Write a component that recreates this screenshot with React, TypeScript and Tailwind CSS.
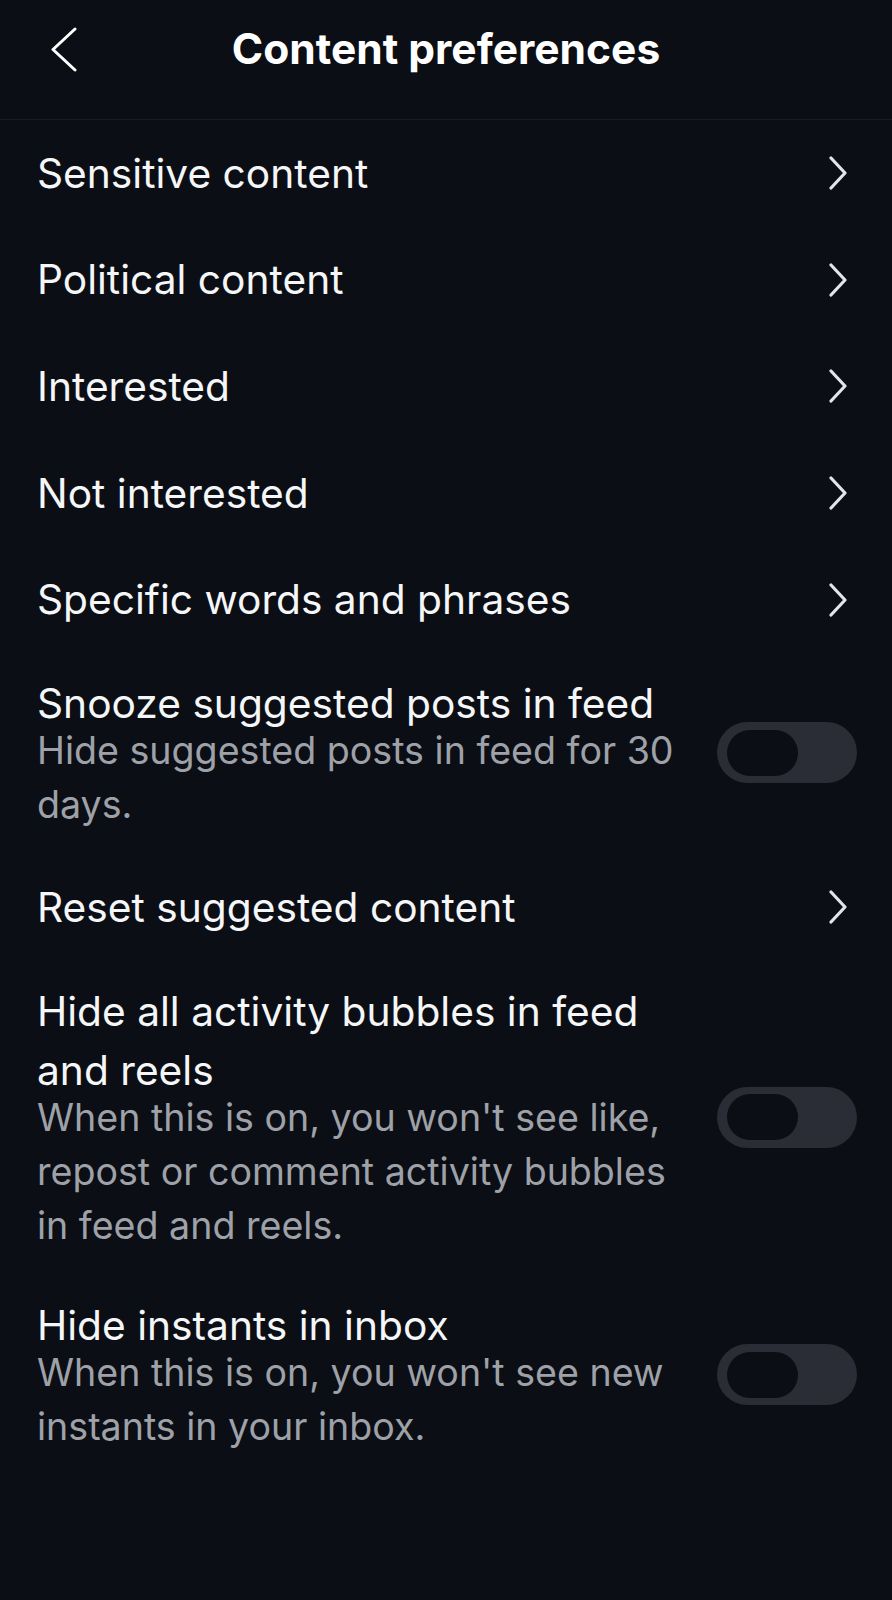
import { useState } from "react";

type Item =
  | { kind: "link"; title: string }
  | { kind: "toggle"; title: string; desc: string };

const items: Item[] = [
  { kind: "link", title: "Sensitive content" },
  { kind: "link", title: "Political content" },
  { kind: "link", title: "Interested" },
  { kind: "link", title: "Not interested" },
  { kind: "link", title: "Specific words and phrases" },
  { kind: "toggle", title: "Snooze suggested posts in feed", desc: "Hide suggested posts in feed for 30 days." },
  { kind: "link", title: "Reset suggested content" },
  {
    kind: "toggle",
    title: "Hide all activity bubbles in feed and reels",
    desc: "When this is on, you won't see like, repost or comment activity bubbles in feed and reels.",
  },
  {
    kind: "toggle",
    title: "Hide instants in inbox",
    desc: "When this is on, you won't see new instants in your inbox.",
  },
];

const Chevron = () => (
  <svg width="20" height="34" viewBox="0 0 20 34" fill="none" className="shrink-0">
    <path d="M3 2 L17 17 L3 32" stroke="#e4e5e8" strokeWidth={3.2} strokeLinecap="round" strokeLinejoin="round" />
  </svg>
);

const BackArrow = () => (
  <svg width="28" height="45" viewBox="0 0 28 45" fill="none">
    <path d="M25 2 L3 22.5 L25 43" stroke="#ffffff" strokeWidth={3} strokeLinecap="round" strokeLinejoin="round" />
  </svg>
);

const Toggle = () => {
  const [on, setOn] = useState(false);
  return (
    <button
      onClick={() => setOn(!on)}
      className={`shrink-0 w-[140px] h-[61px] rounded-full flex items-center px-[10px] ${
        on ? "bg-[#3b82f6] justify-end" : "bg-[#2a2d35] justify-start"
      }`}
    >
      <span className="block w-[71px] h-[46px] rounded-full bg-[#0b0e14]" />
    </button>
  );
};

export default function App() {
  return (
    <div
      className="min-h-[1600px] bg-[#0b0e14] text-[#f5f6f7]"
      style={{ fontFamily: "Inter, 'Noto Sans', sans-serif" }}
    >
      <div className="relative h-[120px] flex items-start justify-center border-b border-[#1a1d24]">
        <button className="absolute left-[50px] top-[27px]">
          <BackArrow />
        </button>
        <h1 className="mt-[23px] text-[42.5px] leading-[52px] font-bold text-white">
          Content preferences
        </h1>
      </div>

      <div>
        {items.map((it) =>
          it.kind === "link" ? (
            <div
              key={it.title}
              className="flex items-center justify-between pl-[37px] pr-[44px] py-[23.8px]"
            >
              <span className="text-[40.7px] leading-[59px]">{it.title}</span>
              <Chevron />
            </div>
          ) : (
            <div
              key={it.title}
              className="flex items-center gap-[28px] pl-[37px] pr-[35px] pt-[21px] pb-[22px]"
            >
              <div className="flex-1 flex flex-col">
                <span className="text-[40.7px] leading-[59px]">{it.title}</span>
                <span className="-mt-[9px] text-[37.6px] leading-[54px] text-[#9ea1a8]">{it.desc}</span>
              </div>
              <Toggle />
            </div>
          )
        )}
      </div>
    </div>
  );
}
